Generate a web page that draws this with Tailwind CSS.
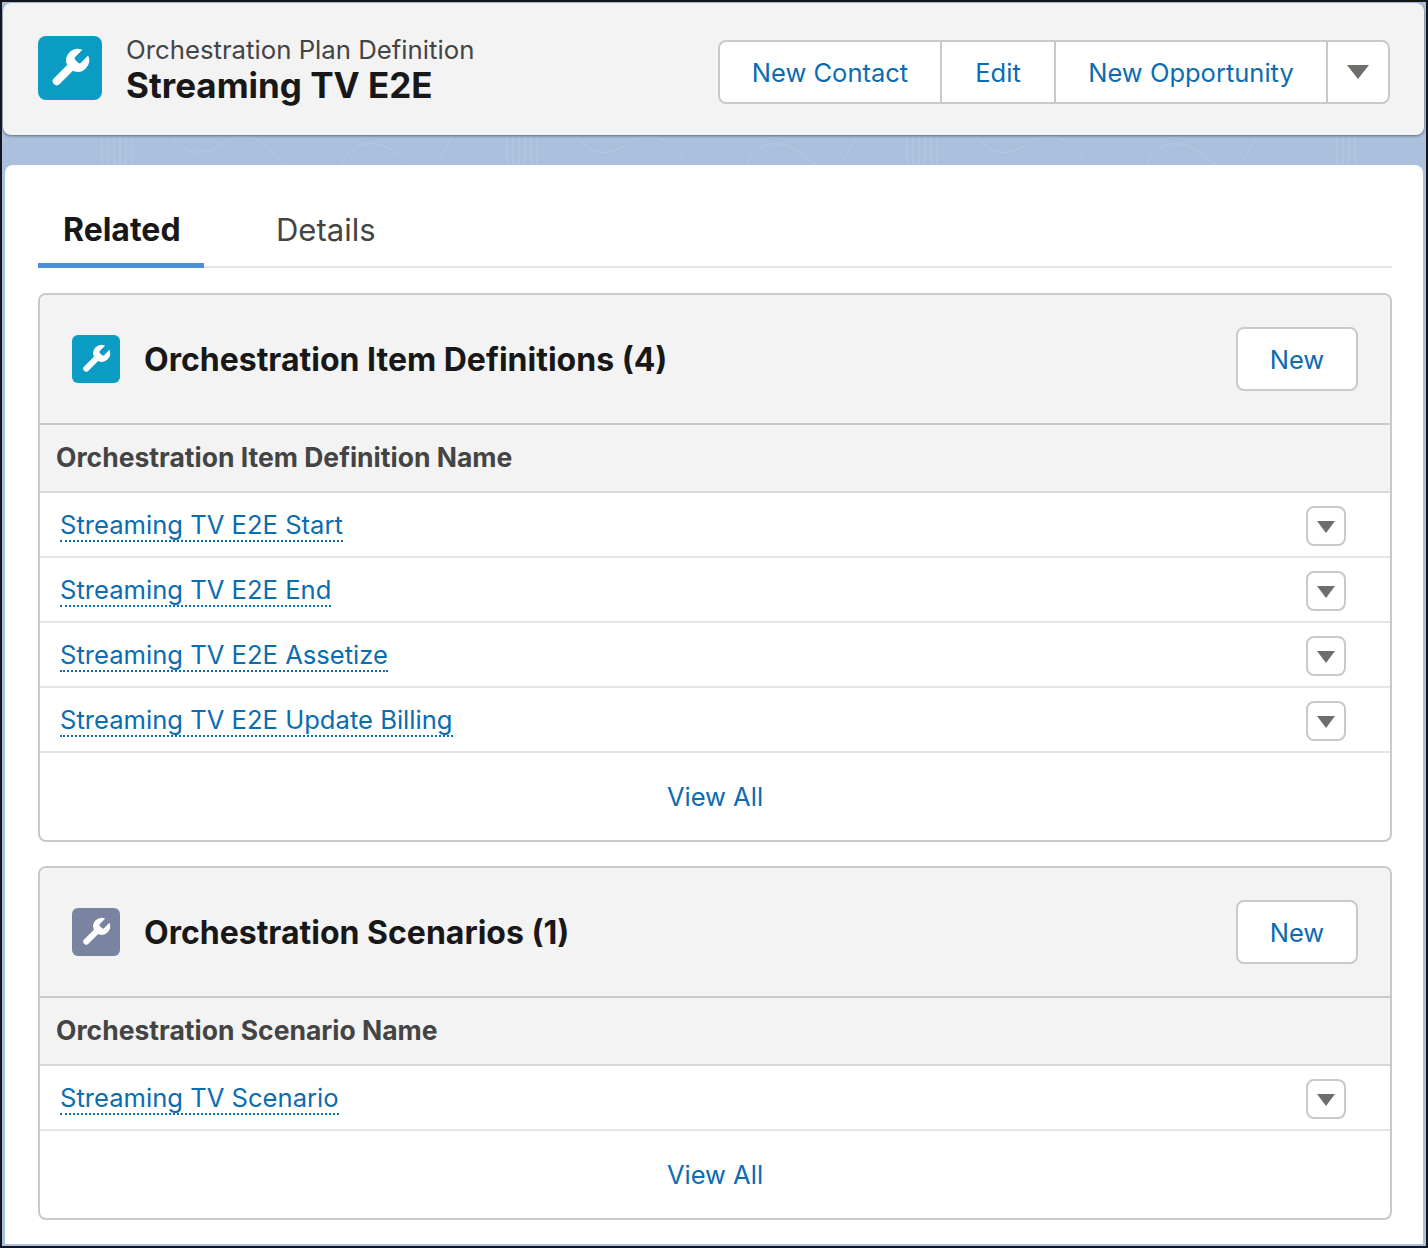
<!DOCTYPE html>
<html lang="en">
	<head>
		<meta charset="UTF-8" />
		<title>Orchestration Plan Definition</title>
		<script src="https://cdn.jsdelivr.net/npm/@tailwindcss/browser@4"></script>
	</head>
	<body class="bg-[#111111] font-['Inter','Liberation_Sans',sans-serif]">
		<div class="relative w-[1428px] h-[1248px] border-2 border-[#14161c] bg-[#abc0dd] overflow-hidden">
			<!-- page texture behind the header -->
			<svg class="absolute left-0 top-[132px] w-[1424px] h-[32px]" viewBox="0 0 1424 32" fill="none" stroke="#b7c9e3" stroke-width="1">
				<path d="M100 0v30M106 0v30M112 0v30M118 0v30M124 0v30M130 0v30M170 0c10 20 30 24 50 10s40-10 60 20M340 30c10-26 40-26 60-6s40 6 50-24" />
				<path d="M505 0v30M511 0v30M517 0v30M523 0v30M529 0v30M535 0v30M575 0c10 20 30 24 50 10s40-10 60 20M745 30c10-26 40-26 60-6s40 6 50-24" />
				<path d="M905 0v30M911 0v30M917 0v30M923 0v30M929 0v30M935 0v30M975 0c10 20 30 24 50 10s40-10 60 20M1145 30c10-26 40-26 60-6s40 6 50-24M1335 0v30M1341 0v30M1347 0v30M1353 0v30" />
			</svg>

			<header class="relative ml-px mt-px w-[1421px] h-[132px] bg-[#f3f3f3] rounded-lg shadow-[0_1px_3px_rgba(0,0,0,0.45)] flex items-center justify-between pl-[35px] pr-[34px]">
				<div class="flex items-center gap-6 mb-[2px]">
					<div class="w-16 h-16 rounded-lg bg-[#0b9cc4] flex items-center justify-center">
						<svg class="w-[46px] h-[46px]" viewBox="0 0 24 24" fill="#ffffff"><path d="M14.7 6.3a1 1 0 0 0 0 1.4l1.6 1.6a1 1 0 0 0 1.4 0l3.77-3.77a6 6 0 0 1-7.94 7.94l-6.91 6.91a2.12 2.12 0 0 1-3-3l6.91-6.91a6 6 0 0 1 7.94-7.94l-3.76 3.76z" /></svg>
					</div>
					<div class="pt-[4px]">
						<div class="text-[25.75px] leading-[29px] text-[#444444]">Orchestration Plan Definition</div>
						<div class="text-[35px] leading-[42px] font-bold text-[#181818]">Streaming TV E2E</div>
					</div>
				</div>
				<div class="flex h-16 mt-[6px] bg-white border-2 border-[#c9c9c9] rounded-lg text-[25.5px] text-[#0b6cb0]">
					<button class="w-[222px] pt-[2px] border-r-2 border-[#c9c9c9]">New Contact</button>
					<button class="w-[114px] pt-[2px] border-r-2 border-[#c9c9c9]">Edit</button>
					<button class="w-[272px] pt-[2px] border-r-2 border-[#c9c9c9]">New Opportunity</button>
					<button class="w-[60px] flex items-center justify-center">
						<svg class="w-[22px] h-[14px]" viewBox="0 0 22 14" fill="#706e6b"><path d="M0 0h22L11 14z" /></svg>
					</button>
				</div>
			</header>

			<main class="relative ml-[3px] mt-[30px] w-[1418px] h-[1079px] bg-white rounded-t-lg pl-[33px] pr-[31px]">
				<nav class="flex h-[103px] border-b-2 border-[#e5e5e5]">
					<div class="w-[166px] h-[103px] border-b-[5px] border-[#4a8fdc] pl-[25px] pt-[45px] text-[32px] leading-[40px] font-bold text-[#181818]">Related</div>
					<div class="pl-[72px] pt-[45px] text-[31px] leading-[40px] text-[#444444]">Details</div>
				</nav>

				<section class="mt-[25px] h-[549px] border-2 border-[#c9c9c9] rounded-lg overflow-hidden">
					<div class="h-[130px] bg-[#f3f3f3] flex items-center justify-between pl-[32px] pr-[32px] border-b-2 border-[#c9c9c9]">
						<div class="flex items-center gap-6">
							<div class="w-12 h-12 rounded-md bg-[#0b9cc4] flex items-center justify-center">
								<svg class="w-[34px] h-[34px]" viewBox="0 0 24 24" fill="#ffffff"><path d="M14.7 6.3a1 1 0 0 0 0 1.4l1.6 1.6a1 1 0 0 0 1.4 0l3.77-3.77a6 6 0 0 1-7.94 7.94l-6.91 6.91a2.12 2.12 0 0 1-3-3l6.91-6.91a6 6 0 0 1 7.94-7.94l-3.76 3.76z" /></svg>
							</div>
							<h2 class="pt-[2px] text-[32px] font-bold text-[#181818]">Orchestration Item Definitions (4)</h2>
						</div>
						<button class="w-[122px] h-16 pt-[2px] bg-white border-2 border-[#c9c9c9] rounded-lg text-[25.5px] text-[#0b6cb0]">New</button>
					</div>
					<div class="h-[68px] bg-[#f3f3f3] flex items-center pl-4 border-b-2 border-[#d8d8d8] text-[26.5px] font-bold text-[#444444]">Orchestration Item Definition Name</div>
					<div class="h-[65px] flex items-center justify-between pt-[2px] pl-5 pr-11 border-b-2 border-[#e5e5e5]">
						<a class="text-[25.6px] leading-[30px] text-[#0b6cb0] border-b-2 border-dotted border-[#0b6cb0]">Streaming TV E2E Start</a>
						<button class="w-10 h-10 bg-white border-2 border-[#c9c9c9] rounded-lg flex items-center justify-center"><svg class="w-[18px] h-[12px] mt-[2px]" viewBox="0 0 18 12" fill="#706e6b"><path d="M0 0h18L9 12z" /></svg></button>
					</div>
					<div class="h-[65px] flex items-center justify-between pt-[2px] pl-5 pr-11 border-b-2 border-[#e5e5e5]">
						<a class="text-[25.6px] leading-[30px] text-[#0b6cb0] border-b-2 border-dotted border-[#0b6cb0]">Streaming TV E2E End</a>
						<button class="w-10 h-10 bg-white border-2 border-[#c9c9c9] rounded-lg flex items-center justify-center"><svg class="w-[18px] h-[12px] mt-[2px]" viewBox="0 0 18 12" fill="#706e6b"><path d="M0 0h18L9 12z" /></svg></button>
					</div>
					<div class="h-[65px] flex items-center justify-between pt-[2px] pl-5 pr-11 border-b-2 border-[#e5e5e5]">
						<a class="text-[25.6px] leading-[30px] text-[#0b6cb0] border-b-2 border-dotted border-[#0b6cb0]">Streaming TV E2E Assetize</a>
						<button class="w-10 h-10 bg-white border-2 border-[#c9c9c9] rounded-lg flex items-center justify-center"><svg class="w-[18px] h-[12px] mt-[2px]" viewBox="0 0 18 12" fill="#706e6b"><path d="M0 0h18L9 12z" /></svg></button>
					</div>
					<div class="h-[65px] flex items-center justify-between pt-[2px] pl-5 pr-11 border-b-2 border-[#e5e5e5]">
						<a class="text-[25.6px] leading-[30px] text-[#0b6cb0] border-b-2 border-dotted border-[#0b6cb0]">Streaming TV E2E Update Billing</a>
						<button class="w-10 h-10 bg-white border-2 border-[#c9c9c9] rounded-lg flex items-center justify-center"><svg class="w-[18px] h-[12px] mt-[2px]" viewBox="0 0 18 12" fill="#706e6b"><path d="M0 0h18L9 12z" /></svg></button>
					</div>
					<div class="h-[87px] pt-[2px] flex items-center justify-center text-[25.5px] text-[#0b6cb0]">View All</div>
				</section>

				<section class="mt-6 h-[354px] border-2 border-[#c9c9c9] rounded-lg overflow-hidden">
					<div class="h-[130px] bg-[#f3f3f3] flex items-center justify-between pl-[32px] pr-[32px] border-b-2 border-[#c9c9c9]">
						<div class="flex items-center gap-6">
							<div class="w-12 h-12 rounded-md bg-[#7a84a0] flex items-center justify-center">
								<svg class="w-[34px] h-[34px]" viewBox="0 0 24 24" fill="#ffffff"><path d="M14.7 6.3a1 1 0 0 0 0 1.4l1.6 1.6a1 1 0 0 0 1.4 0l3.77-3.77a6 6 0 0 1-7.94 7.94l-6.91 6.91a2.12 2.12 0 0 1-3-3l6.91-6.91a6 6 0 0 1 7.94-7.94l-3.76 3.76z" /></svg>
							</div>
							<h2 class="pt-[2px] text-[32px] font-bold text-[#181818]">Orchestration Scenarios (1)</h2>
						</div>
						<button class="w-[122px] h-16 pt-[2px] bg-white border-2 border-[#c9c9c9] rounded-lg text-[25.5px] text-[#0b6cb0]">New</button>
					</div>
					<div class="h-[68px] bg-[#f3f3f3] flex items-center pl-4 border-b-2 border-[#d8d8d8] text-[26.5px] font-bold text-[#444444]">Orchestration Scenario Name</div>
					<div class="h-[65px] flex items-center justify-between pt-[2px] pl-5 pr-11 border-b-2 border-[#e5e5e5]">
						<a class="text-[25.6px] leading-[30px] text-[#0b6cb0] border-b-2 border-dotted border-[#0b6cb0]">Streaming TV Scenario</a>
						<button class="w-10 h-10 bg-white border-2 border-[#c9c9c9] rounded-lg flex items-center justify-center"><svg class="w-[18px] h-[12px] mt-[2px]" viewBox="0 0 18 12" fill="#706e6b"><path d="M0 0h18L9 12z" /></svg></button>
					</div>
					<div class="h-[87px] pt-[2px] flex items-center justify-center text-[25.5px] text-[#0b6cb0]">View All</div>
				</section>
			</main>
		</div>
	</body>
</html>
